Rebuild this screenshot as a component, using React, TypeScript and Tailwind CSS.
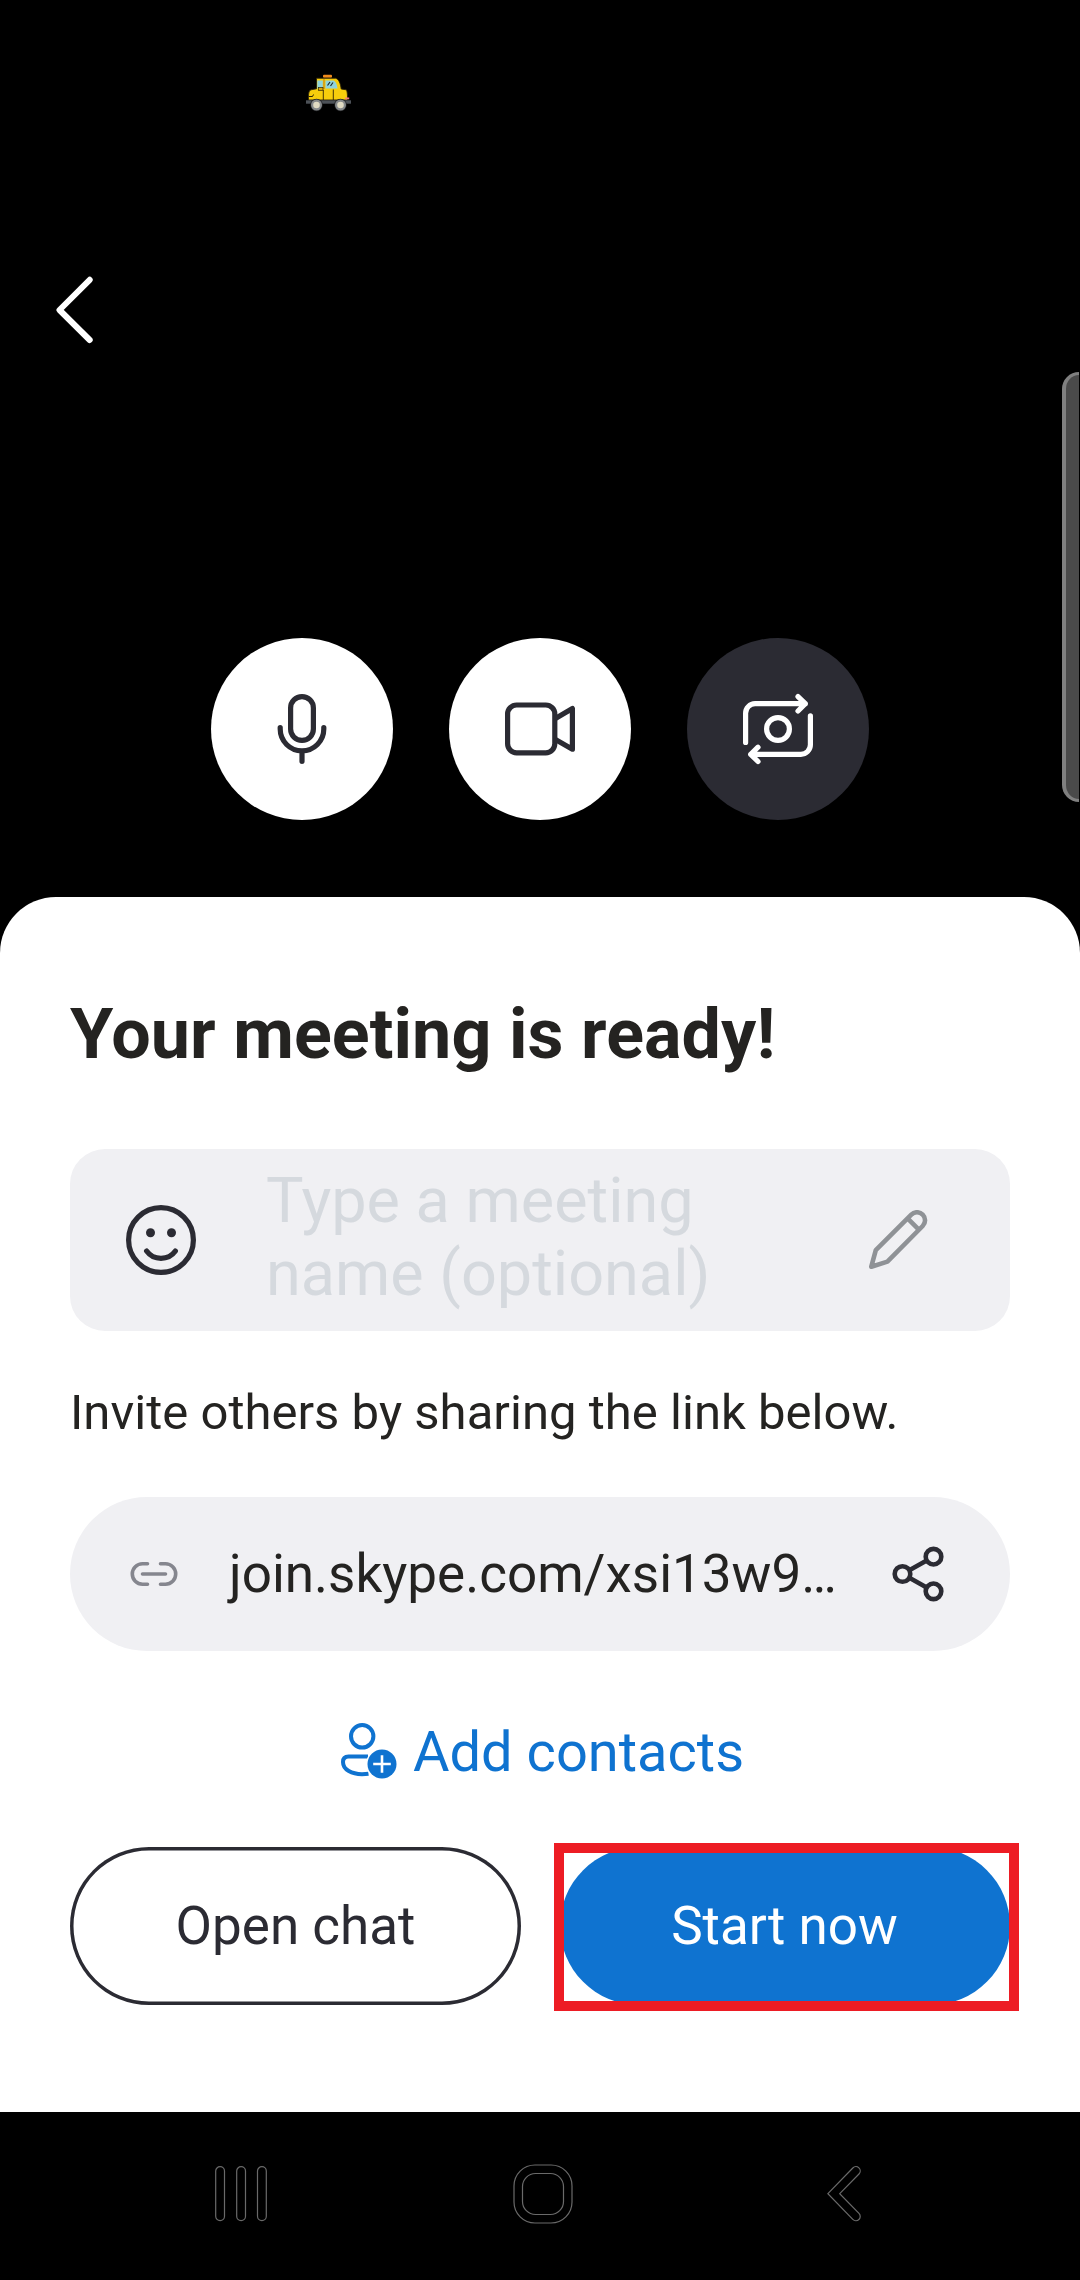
import React from "react";

function TaxiIcon() {
  return (
    <svg width="48" height="38" viewBox="0 0 48 38" fill="none">
      <rect x="18" y="0.800" width="9" height="3" rx="1" fill="#f08a1c" />
      <path
        d="M11.500 4.200H30.500c3.500 1 5 5.300 5.700 10.800l5 .8c1 1 1.300 4 1.300 10.200H3.500C3.200 20 3.800 16.500 6 15.800L11.500 14.800Z"
        fill="#f6cd0c"
        stroke="#2b2307"
        strokeWidth="0.900"
      />
      <path d="M12.300 6.500h5.500v8h-5.500Z" fill="#8fd3dc" />
      <path d="M20.500 6.500h8c2.500 1 3.500 4.500 4 8H20.500Z" fill="#8fd3dc" />
      <path d="M19 5v10" stroke="#c98a1a" strokeWidth="1.200" />
      <path d="M22.500 11.500l2.500-3.500M25.500 12l2.500-3.500" stroke="#1d2a2c" strokeWidth="1.200" />
      <path d="M18.300 16v10M28.300 15.500v10.500" stroke="#2b2307" strokeWidth="0.900" />
      <rect x="13.500" y="13.500" width="4.500" height="2.800" fill="#d9a70a" stroke="#2b2307" strokeWidth="0.700" />
      <path d="M3.500 22.500h4l1-2" stroke="#2b2307" strokeWidth="1" />
      <rect x="40.200" y="23.500" width="4" height="1.800" fill="#f0787c" />
      <rect x="1" y="26.300" width="45" height="3.400" fill="#4c5157" />
      <circle cx="11.500" cy="31" r="6.200" fill="#1f2022" />
      <circle cx="35.500" cy="31" r="6.200" fill="#1f2022" />
      <circle cx="11.500" cy="31" r="4.400" fill="#e0dac2" stroke="#85888a" strokeWidth="2.200" />
      <circle cx="35.500" cy="31" r="4.400" fill="#e0dac2" stroke="#85888a" strokeWidth="2.200" />
    </svg>
  );
}

function MicIcon() {
  return (
    <svg width="182" height="182" viewBox="0 0 182 182" fill="none" stroke="#2b2b33" strokeWidth="5.200" strokeLinecap="round">
      <rect x="79.600" y="58.600" width="22.800" height="43.800" rx="11.400" />
      <path d="M69.200 89.600v1.500a21.800 21.800 0 0 0 43.600 0v-1.500M91 113.500v10" />
    </svg>
  );
}

function VideoIcon() {
  return (
    <svg width="182" height="182" viewBox="0 0 182 182" fill="none" stroke="#2b2b33" strokeWidth="5.200" strokeLinejoin="round">
      <rect x="58.600" y="67" width="47.200" height="47.800" rx="9" />
      <path d="M106 80.800L123.400 70.600V111.200L106 101.300" />
    </svg>
  );
}

function FlipCameraIcon() {
  return (
    <svg width="182" height="182" viewBox="0 0 182 182" fill="none" stroke="#ffffff" strokeWidth="5.200" strokeLinecap="round" strokeLinejoin="round">
      <path d="M58.600 104.400V75.200a9.500 9.500 0 0 1 9.500-9.500H118.300M111 58.600l7.300 7.100l-7.300 7.300" />
      <path d="M123.400 77.900V106.800a9.500 9.500 0 0 1-9.500 9.500H63.700M71 109.200l-7.300 7.100l7.300 7.200" />
      <circle cx="91" cy="91" r="11.400" />
    </svg>
  );
}

function SmileIcon() {
  return (
    <svg width="70" height="70" viewBox="0 0 70 70" fill="none" stroke="#2b2b33" strokeWidth="5.200" strokeLinecap="round">
      <circle cx="35" cy="35" r="32.400" />
      <path d="M20.600 46Q25.800 53.300 35 53.300Q44.200 53.300 49.400 46" />
      <circle cx="24.500" cy="27.800" r="4.500" fill="#2b2b33" stroke="none" />
      <circle cx="45.500" cy="27.800" r="4.500" fill="#2b2b33" stroke="none" />
    </svg>
  );
}

function PencilIcon() {
  return (
    <svg width="60" height="60" viewBox="868 1210 60 60" fill="none" stroke="#8f9296" strokeWidth="4.600" strokeLinejoin="round">
      <path d="M911.300 1214.600a8.050 8.050 0 0 1 11.400 11.400L887.400 1261.600L871.300 1266.700L875.800 1250.200Z" />
      <path d="M907.800 1218.700L918.800 1229.700" />
    </svg>
  );
}

function LinkIcon() {
  return (
    <svg width="48" height="26" viewBox="0 0 48 26" fill="none" stroke="#85868e" strokeWidth="3.600" strokeLinecap="round">
      <path d="M17.500 2.800H12.500a10.200 10.200 0 0 0 0 20.400H17.500M30.500 2.800H35.500a10.200 10.200 0 0 1 0 20.400H30.500M12.500 13H35.500" />
    </svg>
  );
}

function ShareIcon() {
  return (
    <svg width="52" height="56" viewBox="0 0 52 56" fill="none" stroke="#2b2b33" strokeWidth="4.600">
      <circle cx="41.500" cy="10.700" r="7.800" />
      <circle cx="41.500" cy="45.300" r="7.800" />
      <circle cx="10.500" cy="28" r="7.800" />
      <path d="M17.300 24.200L34.700 14.500M17.300 31.800L34.700 41.500" />
    </svg>
  );
}

function AddContactIcon() {
  return (
    <svg width="56" height="56" viewBox="0 0 56 56" fill="none" stroke="#0f73d0" strokeWidth="4">
      <circle cx="21.200" cy="13.300" r="11.200" />
      <path d="M27 33.500H7.500Q2 33.500 2 39C2 47 11 51.200 21 51.200Q24.500 51.200 27.500 50.800" />
      <circle cx="41" cy="41" r="15.800" fill="#ffffff" stroke="none" />
      <circle cx="41" cy="41" r="14.500" fill="#0f73d0" stroke="none" />
      <path d="M41 32.200V49.800M32.200 41H49.800" stroke="#ffffff" strokeWidth="2.600" />
    </svg>
  );
}

function RecentsIcon() {
  return (
    <svg width="52" height="56" viewBox="0 0 52 56" fill="none" stroke="#6a6a6a" strokeWidth="1.200">
      <rect x="0.700" y="0.700" width="8.800" height="54" rx="4.400" />
      <rect x="21.700" y="0.700" width="8.800" height="54" rx="4.400" />
      <rect x="42.500" y="0.700" width="8.800" height="54" rx="4.400" />
    </svg>
  );
}

function HomeIcon() {
  return (
    <svg width="60" height="60" viewBox="0 0 60 60" fill="none" stroke="#6a6a6a" strokeWidth="1.200">
      <rect x="1" y="1" width="58" height="58" rx="21" />
      <rect x="9.500" y="9.500" width="41" height="41" rx="13" />
    </svg>
  );
}

function NavBackIcon() {
  return (
    <svg width="34" height="56" viewBox="0 0 34 56" fill="none" stroke="#6a6a6a" strokeWidth="1.200">
      <path d="M0.900 27.700L25.800 2A4.300 4.300 0 0 1 32 8L12.700 27.700L32 47.400A4.300 4.300 0 0 1 25.800 53.400Z" />
    </svg>
  );
}

export default function App() {
  return (
    <div className="relative flex h-[2280px] w-[1080px] flex-col overflow-hidden bg-black font-['Roboto',sans-serif]">
      <div className="flex h-[897px] flex-col">
        <div className="pl-[305px] pt-[74px]">
          <TaxiIcon />
        </div>
        <button className="ml-[56px] mt-[164px] h-[68px] w-[40px]" aria-label="Back">
          <svg width="40" height="68" viewBox="0 0 40 68" fill="none" stroke="#ffffff" strokeWidth="6" strokeLinecap="round" strokeLinejoin="round">
            <path d="M33.700 3.800L3.500 34L33.700 64" />
          </svg>
        </button>
        <div className="mt-[294px] flex justify-center gap-14">
          <button className="size-[182px] rounded-full bg-white" aria-label="Microphone">
            <MicIcon />
          </button>
          <button className="size-[182px] rounded-full bg-white" aria-label="Camera">
            <VideoIcon />
          </button>
          <button className="size-[182px] rounded-full bg-[#2b2b33]" aria-label="Flip camera">
            <FlipCameraIcon />
          </button>
        </div>
      </div>

      <main className="flex h-[1215px] flex-col rounded-t-[56px] bg-white px-[70px] pt-24">
        <h1 className="text-[70px] font-bold leading-[82px] tracking-[0.080px] text-[#242321]">Your meeting is ready!</h1>

        <div className="mt-[74px] flex h-[182px] items-center rounded-[35px] bg-[#f0f0f3] pl-14 pr-[82px]">
          <SmileIcon />
          <p className="-mt-[6px] ml-[70px] w-[480px] text-[63px] leading-[73px] text-[#d5d9de]">Type a meeting name (optional)</p>
          <div className="ml-auto">
            <PencilIcon />
          </div>
        </div>

        <p className="mt-[53px] text-[49px] leading-[58px] tracking-[0.030px] text-[#242321]">Invite others by sharing the link below.</p>

        <div className="mt-[55px] flex h-[154px] items-center rounded-full bg-[#f0f0f3] pl-[60px] pr-[66px]">
          <LinkIcon />
          <span className="ml-[51px] whitespace-nowrap text-[53px] leading-[62px] text-[#242321]">join.skype.com/xsi13w9…</span>
          <div className="ml-auto">
            <ShareIcon />
          </div>
        </div>

        <div className="mt-[67px] flex h-[66px] items-center gap-4 pl-[271px]">
          <AddContactIcon />
          <span className="mt-[2px] whitespace-nowrap text-[56px] leading-[66px] text-[#0f73d0]">Add contacts</span>
        </div>

        <div className="mt-[63px] flex gap-[39px]">
          <button className="h-[158px] w-[451px] rounded-full pt-px text-[53px] text-[#2b2b33] shadow-[inset_0_0_0_3.500px_#2b2b33]">Open chat</button>
          <div className="relative">
            <button className="h-[158px] w-[450px] rounded-full bg-[#0f73d0] pt-px pr-px text-[53px] text-white">Start now</button>
            <div className="absolute -left-[6px] -top-1 h-[168px] w-[465px] border-[10px] border-[#ed1c24]" />
          </div>
        </div>
      </main>

      <nav className="flex h-[168px] items-start pl-[215px] pt-[52px]">
        <div className="mt-[2px]">
          <RecentsIcon />
        </div>
        <div className="ml-[246px]">
          <HomeIcon />
        </div>
        <div className="ml-[254px] mt-[2px]">
          <NavBackIcon />
        </div>
      </nav>

      <div className="absolute right-px top-[372px] h-[430px] w-[17px] rounded-l-[17px] border-y-[3px] border-l-[4px] border-[#808080] bg-[#4a4a4a]" />
    </div>
  );
}
